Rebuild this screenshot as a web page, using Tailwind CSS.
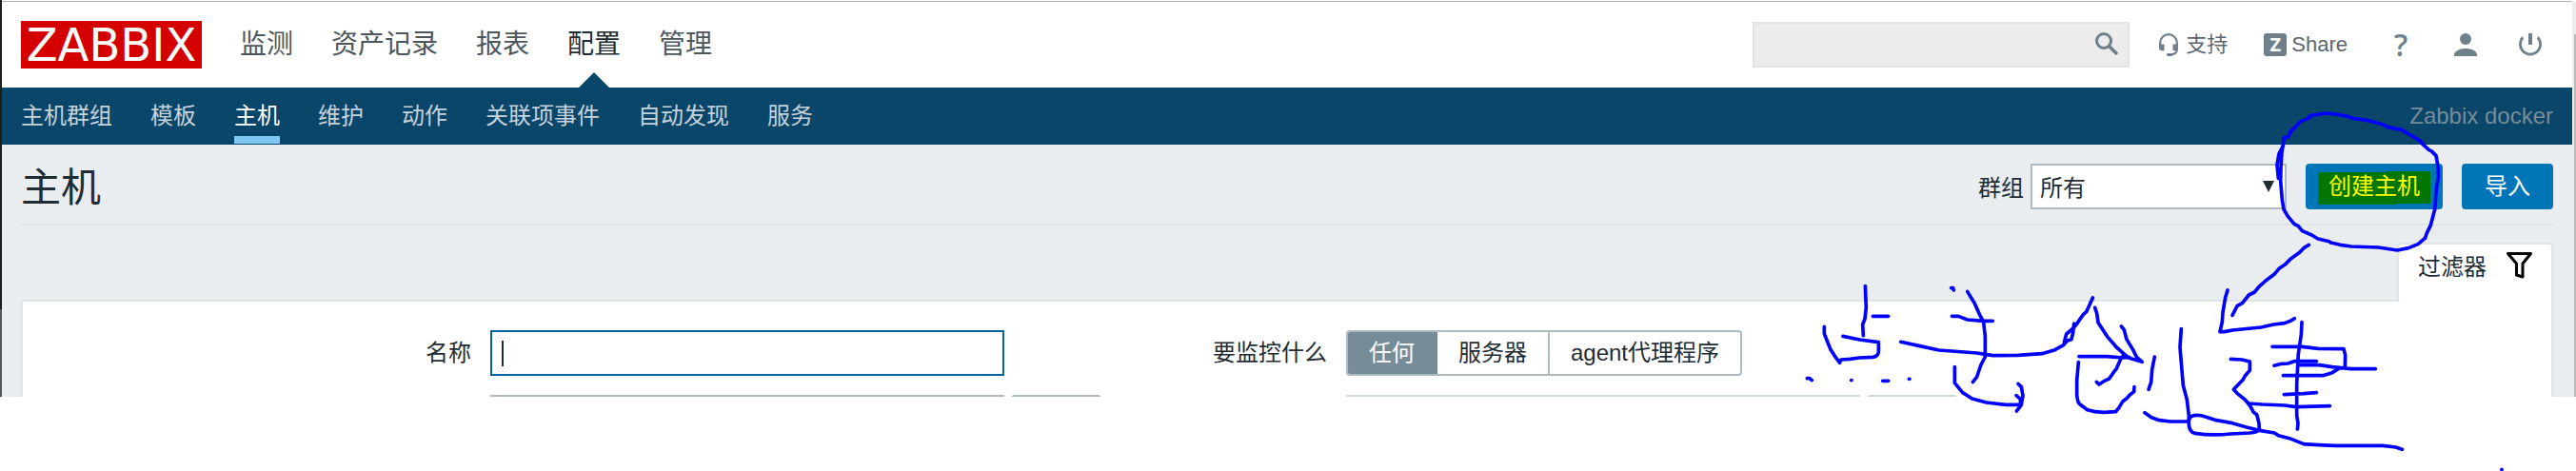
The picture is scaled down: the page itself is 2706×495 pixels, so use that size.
<!DOCTYPE html>
<html lang="zh-CN">
<head>
<meta charset="utf-8">
<title>Zabbix docker: 主机</title>
<script src="https://cdn.jsdelivr.net/npm/@tailwindcss/browser@4"></script>
</head>
<body class="relative min-h-screen bg-white text-2xl text-[#1f2c33] font-['Liberation_Sans','Noto_Sans_CJK_SC',sans-serif]">

<div class="flex">
  <!-- window edge -->
  <div class="flex w-0.5 shrink-0 flex-col">
    <div class="grow bg-[#1e1e1e]"></div>
    <div class="h-[92px] bg-[#555555]"></div>
  </div>

  <div class="min-w-0 grow pt-px">
    <div class="h-px bg-[#b0b0b0]"></div>

    <header class="flex h-[90px] items-center justify-between bg-white pr-8 pl-5">
      <div class="flex items-center gap-10">
        <a href="#" class="flex h-[50px] w-[190px] items-center justify-center bg-[#d40000] text-5xl leading-none text-white font-['DejaVu_Sans',sans-serif]">ZABBIX</a>
        <nav class="flex h-[90px] items-center gap-10 text-[28px] leading-10 text-[#4c565c]">
          <a href="#">监测</a>
          <a href="#">资产记录</a>
          <a href="#">报表</a>
          <a href="#" class="relative flex h-full items-center text-[#1f2c33]">配置
            <svg class="absolute bottom-0 left-3 h-4 w-8" viewBox="0 0 32 16"><path d="M0 16 16 0 32 16z" fill="#0a466a"/></svg>
          </a>
          <a href="#">管理</a>
        </nav>
      </div>
      <div class="flex items-center text-[22px] leading-8 text-[#5a666d]">
        <form class="relative mr-[30px]">
          <input type="text" aria-label="搜索" class="block h-12 w-[396px] border-2 border-[#e3e3e3] bg-[#ececec] pr-12 pl-2 outline-none">
          <button type="button" aria-label="搜索" class="absolute top-[11px] right-3 size-6">
            <svg viewBox="0 0 24 24" fill="none" stroke="#6f808a"><circle cx="9" cy="9" r="7.5" stroke-width="3"/><path d="M14.5 14.5 23 23" stroke-width="3.6"/></svg>
          </button>
        </form>
        <a href="#" class="mr-[38px] flex items-center gap-[7px]">
          <svg class="h-6 w-[22px]" viewBox="0 0 22 24" fill="none" stroke="#6f808a"><path d="M2.2 13V10a8.8 8.8 0 0 1 17.6 0V17C19.800 20 17 22.300 12 22.400" stroke-width="2.2"/><path d="M1 11.500H6.500V18.300H4Q1 18.300 1 15.300zM21 11.500H15.500V18.300H18Q21 18.300 21 15.300z" fill="#6f808a" stroke="none"/><path d="M10.500 22.400H14" stroke-width="3" stroke-linecap="round"/></svg>
          支持</a>
        <a href="#" class="mr-11 flex items-center gap-[5px]"><span class="flex size-6 items-center justify-center rounded-[3px] bg-[#6f808a] text-xl leading-none font-bold text-white font-['Open_Sans',sans-serif]">Z</span>Share</a>
        <div class="flex items-center gap-11 text-[#6f808a]">
          <a href="#" class="w-6 text-center text-[32px] leading-8 font-semibold font-['Open_Sans',sans-serif]">?</a>
          <a href="#" aria-label="用户"><svg class="size-6" viewBox="0 0 24 24" fill="#6f808a"><circle cx="12" cy="6" r="6"/><path d="M0 24V21.500C2 17.500 7 16 12 16S22 17.500 24 21.500V24z"/></svg></a>
          <a href="#" aria-label="退出"><svg class="size-6" viewBox="0 0 24 24" fill="none" stroke="#6f808a"><path d="M4.300 4.200A10.600 10.600 0 1 0 19.700 4.200" stroke-width="2.700"/><path d="M12 0V12" stroke-width="4"/></svg></a>
        </div>
      </div>
    </header>

    <div class="flex h-[60px] items-center justify-between bg-[#0a466a] px-5 text-[#c5d3dc]">
      <nav class="flex h-full items-center gap-10">
        <a href="#">主机群组</a>
        <a href="#">模板</a>
        <a href="#" class="relative flex h-full items-center text-white">主机<span class="absolute bottom-px left-0 h-2 w-full bg-[#80c8f4]"></span></a>
        <a href="#">维护</a>
        <a href="#">动作</a>
        <a href="#">关联项事件</a>
        <a href="#">自动发现</a>
        <a href="#">服务</a>
      </nav>
      <span class="text-[#768d99]">Zabbix docker</span>
    </div>

    <main class="bg-[#e9edf0] px-5 pt-5">
      <div class="flex items-center justify-between border-b-2 border-[#dfe4e7] pb-[15px]">
        <h1 class="pt-1 text-[42px] leading-[44px]">主机</h1>
        <form class="flex items-center">
          <label for="group" class="mr-[7px] pt-1">群组</label>
          <div class="relative mr-5">
            <select id="group" class="block h-12 w-[269px] appearance-none border-2 border-[#acbbc2] bg-white pt-1 pl-2 outline-none"><option>所有</option></select>
            <svg class="pointer-events-none absolute top-[18px] right-[13px] h-3 w-3" viewBox="0 0 12 12"><path d="M0 0H12L6 12z" fill="#1f2c33"/></svg>
          </div>
          <button type="button" class="relative mr-5 h-12 w-36 rounded bg-[#0275b8] text-[#ffff00]">
            <svg class="absolute top-2 left-[13px] h-[35px] w-[118px]" viewBox="0 0 118 35"><path d="M0 1H72V0H118V34H83V35H0z" fill="#007500"/></svg>
            <span class="relative">创建主机</span>
          </button>
          <button type="button" class="h-12 w-24 rounded bg-[#0275b8] text-white">导入</button>
        </form>
      </div>

      <div class="mt-[18px] flex justify-end">
        <a href="#" class="relative -mb-0.5 flex h-[62px] w-[164px] gap-5 rounded-t border-2 border-b-0 border-[#dfe4e7] bg-white pl-5 leading-[48px]">过滤器
          <svg class="mt-2 h-7 w-[29px]" viewBox="0 0 29 28" fill="none" stroke="#000" stroke-width="3"><path d="M2.500 1.500H26.500L18 12V26L11.500 24V12z" stroke-linejoin="round"/></svg>
        </a>
      </div>

      <form class="grid grid-cols-[471fr_659fr_200fr_1266fr] gap-5 border-2 border-b-0 border-[#dfe4e7] bg-white pt-[30px]">
        <label for="name" class="self-center text-right">名称</label>
        <div class="relative">
          <input id="name" type="text" class="block h-12 w-[540px] border-2 border-[#0064a0] bg-white px-2.5 outline-none">
          <span class="pointer-events-none absolute top-[11px] left-3 h-[27px] w-0.5 bg-[#1f2c33]"></span>
        </div>
        <span id="monitored" class="self-center text-right">要监控什么</span>
        <div role="radiogroup" aria-labelledby="monitored" class="flex h-12 w-[416px] overflow-hidden rounded border-2 border-[#acbbc2]">
          <label class="-my-0.5 -ml-0.5 flex w-24 items-center justify-center bg-[#768d99] text-white"><input type="radio" name="m" checked class="sr-only">任何</label>
          <label class="flex w-[118px] items-center justify-center border-r-2 border-[#acbbc2]"><input type="radio" name="m" class="sr-only">服务器</label>
          <label class="flex grow items-center justify-center"><input type="radio" name="m" class="sr-only">agent代理程序</label>
        </div>

        <div class="col-start-2 flex h-0.5 gap-[7px] overflow-hidden">
          <input type="text" aria-label="模板" class="h-12 w-[540px] border-2 border-[#acbbc2]">
          <button type="button" aria-label="选择模板" class="h-12 w-[95px] rounded border-2 border-[#acbbc2]"></button>
        </div>
        <div class="col-start-4 flex h-0.5 gap-[7px] overflow-hidden">
          <input type="text" aria-label="代理" class="h-12 w-[540px] border-2 border-[#ccd5d9]">
          <button type="button" aria-label="选择代理" class="h-12 w-[95px] rounded border-2 border-[#ccd5d9]"></button>
        </div>
      </form>
    </main>
  </div>

  <!-- page scrollbar -->
  <div class="mt-0.5 w-1 shrink-0 bg-[#ededee] pt-[34px] pl-0.5">
    <div class="h-full bg-[#b9babb]"></div>
  </div>
</div>

<!-- pen annotation -->
<svg class="pointer-events-none absolute top-[100px] right-0 h-[395px] w-[860px]" viewBox="1846 100 860 395" fill="none" stroke="#0000ff" stroke-linecap="round" stroke-linejoin="round">
  <g transform="translate(2380 110) scale(.33333)" stroke-width="11">
    <path d="M40 232 36 190 42 155 55 130 57 103 72 101 78 85 110 53 135 43 140 35 190 27 220 30 255 36 275 43 325 50 370 63 385 71 428 79 460 98 488 115 492 122 515 143 522 146 537 161 543 195 544 230 538 265 533 330 520 380 507 407 503 420 480 440 450 452 415 459 355 450 270 447 235 442 205 435 200 431 165 423 145 411 115 398 103 383 90 376 70 352 57 330 52 300 47 240 48 200 51 150 58 105"/>
    <path d="M136 442 120 452 107 466 80 485 60 505 42 517 27 535 0 555 -22 575 -35 591 -53 600 -73 625 -90 635 -105 664"/>
  </g>
  <g transform="translate(1890 290) scale(.33333)" stroke-width="11">
    <path d="M208 32 211 100 207 135 200 153 202 188M232 127H281M79 160V182L90 210 98 230 115 257 128 274M138 190 190 201 250 209V240Q248 254 232 256L190 258 160 262 132 264 128 272"/>
    <path d="M25 323H33L40 329M164 329H165M263 331H281M346 325H348M479 38H485L487 45"/>
    <path d="M530 49 552 85 570 125 581 145 586 190V255L572 282 560 318 547 335M481 127H502L530 138 580 142H610"/>
    <path d="M320 208 380 221 440 234 560 243 610 251 690 250 765 245 806 233 833 218 845 204 858 200 863 178 866 150M835 210 842 183 860 168 872 155 895 122 905 113 918 85 925 69"/>
    <path d="M490 287V337L515 368 545 387 590 399 650 406H700L705 377 700 350 690 340M684 377 697 388 698 410 685 426"/>
    <path d="M932 100 938 118 942 147 970 190 1000 225 1032 253M882 254H970L1020 258 1040 256M880 272 875 330V375Q877 400 885 405L908 422Q930 429 960 430L997 428 1006 418 1020 395 1032 386 1042 375 1055 365 1056 350M1014 260 1000 292 990 305 977 324 960 332 945 342 937 334"/>
  </g>
  <g transform="translate(2220 290) scale(.33333)" stroke-width="11">
    <path d="M25 159 34 170 42 200 62 233 73 255 91 271 60 262 30 252M130 255 122 295 119 335 111 358"/>
    <path d="M360 45 353 68 345 115 343 145 336 176H350L375 171 465 162 505 153 540 149 560 141 571 134"/>
    <path d="M214 167 210 225 215 285 220 345 232 390 238 440V470Q241 492 256 496 310 504 370 498L430 495Q453 493 460 484L459 465 452 437 442 430 430 408 415 390 390 370 379 358 408 328 415 315 430 298V270L405 264 370 262"/>
    <path d="M99 431 120 446 145 455 180 459H235L244 443Q265 435 290 444L320 454 375 464 420 477 460 487 508 495 520 503 555 512 600 530Q620 532 700 535H850L890 540 910 547"/>
    <path d="M594 146 592 185 583 245 578 340V440L582 465 580 483M501 223H595L645 229 726 230 731 250 730 290 712 291 690 305 660 314H535M507 283 530 277 550 276 570 269H640M590 281H650L690 287 750 293H826M538 374 600 371 640 368M425 402 470 405 540 408 575 413 682 410M1224 610V611"/>
  </g>
</svg>
</body>
</html>
